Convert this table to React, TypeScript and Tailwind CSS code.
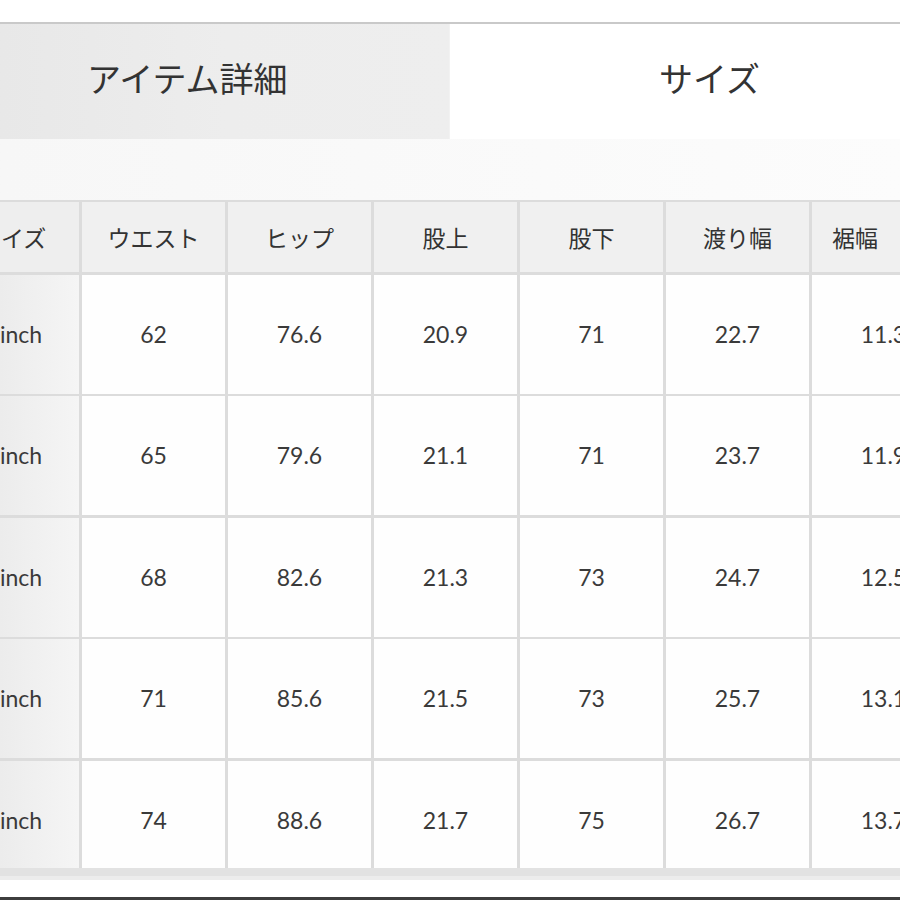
import React from "react";

const headers = ["ウエスト", "ヒップ", "股上", "股下", "渡り幅", "裾幅"];
const rows = [
  ["62", "76.6", "20.9", "71", "22.7", "11.3"],
  ["65", "79.6", "21.1", "71", "23.7", "11.9"],
  ["68", "82.6", "21.3", "73", "24.7", "12.5"],
  ["71", "85.6", "21.5", "73", "25.7", "13.1"],
  ["74", "88.6", "21.7", "75", "26.7", "13.7"],
];

const jp = { fontFamily: '"Noto Sans CJK JP", "Noto Sans", sans-serif' };
const num = { fontFamily: 'Lato, "Noto Sans CJK JP", sans-serif' };

export default function App() {
  return (
    <div className="w-[900px] h-[900px] overflow-hidden bg-white flex flex-col text-[#333333]" style={jp}>
      <div className="h-[22px] shrink-0 bg-white" />
      <div className="h-[2px] shrink-0 bg-[#c9c9c9]" />
      <div className="flex h-[115px] shrink-0">
        <div className="w-[449px] bg-gradient-to-r from-[#e8e8e8] via-[#ededed] to-[#eeeeee] flex items-center pl-[87px] pb-[8px] text-[34px] leading-none">
          アイテム詳細
        </div>
        <div className="flex-1 bg-white border-l border-[#f2f2f2] flex items-center pl-[209px] pb-[8px] text-[34px] leading-none">
          サイズ
        </div>
      </div>
      <div className="h-[61px] shrink-0 bg-gradient-to-r from-[#f7f7f7] to-[#fcfcfc]" />
      <div className="relative h-[680px] shrink-0 overflow-hidden bg-[#dcdcdc] pt-[2px]">
        <div className="grid grid-cols-[79px_repeat(6,143px)] grid-rows-[70px_repeat(5,119px)] gap-x-[3px] gap-y-[2.5px] w-[955px]">
          <div className="bg-[#eeeeee] flex items-center pl-[1px] text-[23px] leading-none overflow-hidden whitespace-nowrap">
            イズ
          </div>
          {headers.map((h, i) => (
            <div
              key={h}
              className={
                i === 5
                  ? "bg-[#f0f0f0] flex items-center pl-[20px] text-[23px] leading-none whitespace-nowrap"
                  : "bg-[#f0f0f0] flex items-center justify-center text-[23px] leading-none whitespace-nowrap"
              }
            >
              {h}
            </div>
          ))}
          {rows.map((r, ri) => (
            <React.Fragment key={ri}>
              <div
                className="bg-gradient-to-r from-[#ececec] to-[#f5f5f5] flex items-center text-[23px] leading-none whitespace-nowrap text-[#3a3a3a]"
                style={num}
              >
                inch
              </div>
              {r.map((v, ci) => (
                <div
                  key={ci}
                  className="bg-[#fefefe] flex items-center justify-center text-[23px] leading-none text-[#3a3a3a]"
                  style={num}
                >
                  {v}
                </div>
              ))}
            </React.Fragment>
          ))}
        </div>
        <div className="absolute left-0 right-0 top-[668px] h-[8px] bg-[#e2e2e2]" />
        <div className="absolute left-0 right-0 top-[676px] h-[4px] bg-[#ececec]" />
      </div>
      <div className="h-[17px] shrink-0 bg-white" />
      <div className="h-[3px] shrink-0 bg-[#3d3d3d]" />
    </div>
  );
}
